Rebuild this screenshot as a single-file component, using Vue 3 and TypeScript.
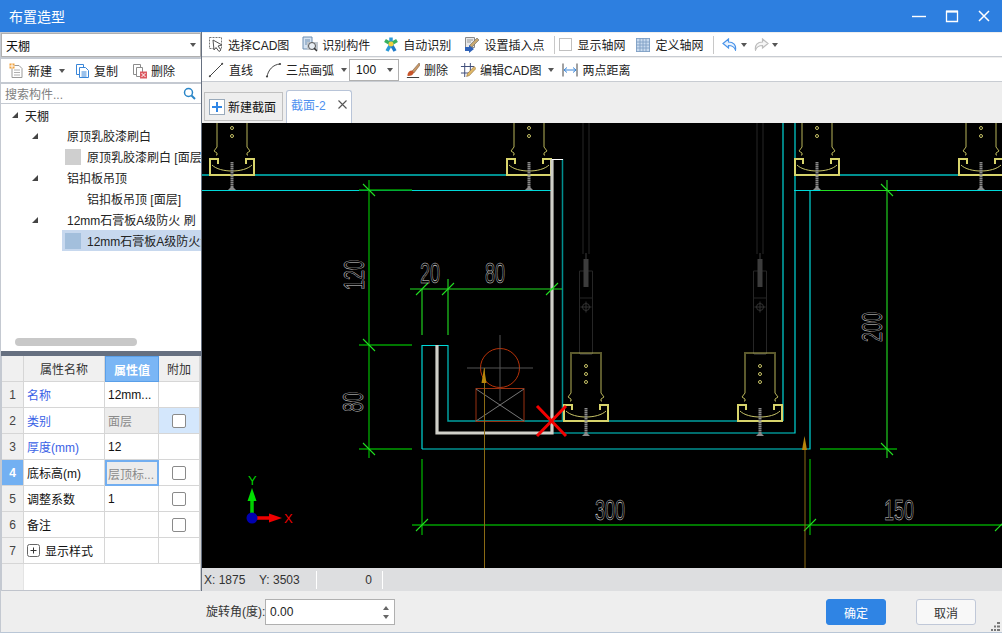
<script setup lang="ts">
interface TreeRow { label: string; level: number; swatch?: string; selected?: boolean }
interface PropRow { name: string; value: string; blue?: boolean; grayValue?: boolean; check?: boolean; active?: boolean; hilite?: boolean; plus?: boolean }

const tree: TreeRow[] = [
  { label: '天棚', level: 0 },
  { label: '原顶乳胶漆刷白', level: 1 },
  { label: '原顶乳胶漆刷白 [面层]', level: 2, swatch: '#cfcfcf' },
  { label: '铝扣板吊顶', level: 1 },
  { label: '铝扣板吊顶 [面层]', level: 2, swatch: 'transparent' },
  { label: '12mm石膏板A级防火 刷', level: 1 },
  { label: '12mm石膏板A级防火涂料', level: 2, swatch: '#a3bfdc', selected: true },
]

const props: PropRow[] = [
  { name: '名称', value: '12mm...', blue: true },
  { name: '类别', value: '面层', blue: true, grayValue: true, check: true, hilite: true },
  { name: '厚度(mm)', value: '12', blue: true },
  { name: '底标高(m)', value: '层顶标...', grayValue: true, check: true, active: true },
  { name: '调整系数', value: '1', check: true },
  { name: '备注', value: '', check: true },
  { name: '显示样式', value: '', plus: true },
]

const upperHangers = [232, 529, 817, 981]
const lowerHangers = [586, 760]

const greenLines: number[][] = [
  [369, 180, 369, 458], [359, 190, 412, 190], [359, 345, 412, 345], [359, 449, 412, 449],
  [412, 525, 1002, 525], [422, 459, 422, 535], [810, 459, 810, 535],
  [820, 449, 897, 449],
]
/* [x, y, slope]: slope 1 leans like "/", -1 leans like "\" */
const ticks: number[][] = [
  [369, 190, -1], [369, 345, -1], [369, 449, -1], [887, 190, -1], [887, 449, -1],
  [422, 289, 1], [448, 289, 1], [552, 289, 1],
  [422, 525, 1], [810, 525, 1], [1001, 525, 1],
]
</script>

<template>
  <div class="win">
    <header class="title">
      <span class="title-text">布置造型</span>
      <div class="winbtns">
        <svg width="16" height="16" viewBox="0 0 16 16"><path d="M1 8.500h14" stroke="#fff" stroke-width="1.400" /></svg>
        <svg width="14" height="14" viewBox="0 0 14 14"><path d="M1.500 2.500h11v10h-11z" fill="none" stroke="#fff" stroke-width="1.300" /><path d="M1 2.500h12" stroke="#fff" stroke-width="2" /></svg>
        <svg width="14" height="14" viewBox="0 0 14 14"><path d="M2 2l10 10M12 2L2 12" stroke="#fff" stroke-width="1.500" /></svg>
      </div>
    </header>

    <div class="body">
      <aside class="left">
        <div class="combo">
          <span>天棚</span>
          <i class="caret"></i>
        </div>
        <div class="ltools">
          <span class="ltool">
            <svg width="15" height="16" viewBox="0 0 15 16"><path d="M3 2.500h7l3 3v9H3z" fill="#fff" stroke="#9a9a9a" /><path d="M5 7h6M5 9.500h6M5 12h6" stroke="#b0b0b0" /><rect x="0.500" y="0.500" width="5" height="5" fill="#f2a23c" /><path d="M3 0.500v5M0.500 3h5" stroke="#fff" /></svg>
            新建<i class="caret new-caret"></i>
          </span>
          <span class="ltool">
            <svg width="15" height="16" viewBox="0 0 15 16"><path d="M1.500 1.500h7v10h-7z" fill="#fff" stroke="#3a86d8" /><path d="M4.500 4.500h6l3 3v7h-9z" fill="#fff" stroke="#3a86d8" /><path d="M6.500 9h5M6.500 11h5M6.500 13h5" stroke="#3a86d8" /></svg>
            复制
          </span>
          <span class="ltool">
            <svg width="15" height="16" viewBox="0 0 15 16"><path d="M1.500 1.500h7v10h-7z" fill="#fff" stroke="#8c8c8c" /><path d="M4.500 4.500h6v9h-6z" fill="#fff" stroke="#8c8c8c" /><rect x="8" y="8.500" width="7" height="7" fill="#dc5a62" /><path d="M9.500 10l4 4M13.500 10l-4 4" stroke="#fff" /></svg>
            删除
          </span>
        </div>
        <div class="search">
          <span>搜索构件...</span>
          <svg width="13" height="13" viewBox="0 0 13 13"><circle cx="5.500" cy="5.500" r="4" fill="none" stroke="#2a86c8" stroke-width="1.500" /><path d="M8.500 8.500l3.500 3.500" stroke="#2a86c8" stroke-width="2" /></svg>
        </div>
        <div class="tree">
          <div v-for="row in tree" :key="row.label" class="node" :class="['lv' + row.level, { selected: row.selected }]">
            <i v-if="row.level < 2" class="tri"></i>
            <i v-else class="swatch" :style="{ background: row.swatch }"></i>
            <span class="node-label">{{ row.label }}</span>
          </div>
          <div class="hscroll"></div>
        </div>
        <div class="splitter"></div>
        <div class="props">
          <div class="prow head">
            <div class="cell idx"></div>
            <div class="cell center">属性名称</div>
            <div class="cell center headval">属性值</div>
            <div class="cell center">附加</div>
          </div>
          <div v-for="(p, i) in props" :key="p.name" class="prow">
            <div class="cell idx center" :class="{ idxactive: p.active }">{{ i + 1 }}</div>
            <div class="cell" :class="{ bluetext: p.blue }">
              <svg v-if="p.plus" class="plus" width="13" height="13" viewBox="0 0 13 13"><rect x="0.500" y="0.500" width="12" height="12" rx="2" fill="#fff" stroke="#666" /><path d="M3.500 6.500h6M6.500 3.500v6" stroke="#333" /></svg>
              {{ p.name }}
            </div>
            <div class="cell" :class="{ grayval: p.grayValue, activeval: p.active }">{{ p.value }}</div>
            <div class="cell center" :class="{ hilite: p.hilite }"><i v-if="p.check" class="check"></i></div>
          </div>
          <div class="prest"><div class="idx restidx"></div></div>
        </div>
      </aside>

      <main class="right">
        <div class="toolbar">
          <span class="tool">
            <svg width="16" height="17" viewBox="0 0 16 17"><path d="M1.500 1.500h12v11h-12z" fill="none" stroke="#777" stroke-dasharray="2 1" /><path d="M5 4l9 5-4 1 3 4-2 1.500-3-4-2 2.500z" fill="#fff" stroke="#555" /></svg>
            选择CAD图
          </span>
          <span class="tool">
            <svg width="16" height="17" viewBox="0 0 16 17"><path d="M1 1h9v12H1z" fill="#d5e3f2" stroke="#6d8eb0" /><path d="M3 4h5M3 6h5M3 8h3" stroke="#6d8eb0" /><rect x="5" y="6" width="11" height="8" fill="#c0c8d0" /><circle cx="10" cy="10" r="3.500" fill="#e8eef4" stroke="#555" /><path d="M12 12l3 3" stroke="#333" stroke-width="1.500" /></svg>
            识别构件
          </span>
          <span class="tool">
            <svg width="16" height="17" viewBox="0 0 16 17"><path d="M8 8V1.500" stroke="#2c9ad8" stroke-width="3.500" /><path d="M8 8L2 4.500" stroke="#38b060" stroke-width="3.500" /><path d="M8 8l6-3.500" stroke="#38b060" stroke-width="3.500" /><path d="M8 8l-4 7" stroke="#2c9ad8" stroke-width="3.500" /><path d="M8 8l4 7" stroke="#1f78c8" stroke-width="3.500" /><circle cx="8" cy="8" r="2.500" fill="#f0d040" /></svg>
            自动识别
          </span>
          <span class="tool">
            <svg width="16" height="17" viewBox="0 0 16 17"><path d="M1.500 1.500h9v10h-9z" fill="#e8e8e8" stroke="#8a8a8a" /><path d="M3 4h6M3 6h4" stroke="#999" /><path d="M6 9l7-7 2 2-7 7-3 1z" fill="#c8a870" stroke="#666" stroke-width=".6" /><path d="M1 11h4V9l5 4-5 4v-2H1z" fill="#2f62b8" /></svg>
            设置插入点
          </span>
          <i class="vsep"></i>
          <span class="tool tight"><i class="tbcheck"></i>显示轴网</span>
          <span class="tool grid-tool">
            <svg width="16" height="16" viewBox="0 0 16 16"><rect x="1" y="1" width="14" height="14" fill="#c9dbef" /><path d="M1.500 1v14M5 1v14M8 1v14M11 1v14M14.500 1v14M1 1.500h14M1 5h14M1 8h14M1 11h14M1 14.500h14" stroke="#7f9fc4" stroke-width=".9" /></svg>
            定义轴网
          </span>
          <i class="vsep"></i>
          <span class="tool undo">
            <svg width="16" height="13" viewBox="0 0 16 13"><path d="M6.500 1L1 5.500 6.500 10V7.500c3.500 0 5.500.8 7 4.500.8-5-2-8-7-8z" fill="#eaf3fe" stroke="#4a94ea" stroke-width="1.200" /></svg>
            <i class="caret"></i>
          </span>
          <span class="tool redo">
            <svg width="16" height="13" viewBox="0 0 16 13"><path d="M9.500 1L15 5.500 9.500 10V7.500c-3.500 0-5.500.8-7 4.500-.8-5 2-8 7-8z" fill="#f6f6f6" stroke="#bdbdbd" stroke-width="1.200" /></svg>
            <i class="caret"></i>
          </span>
        </div>

        <div class="toolbar second">
          <span class="tool wide">
            <svg width="16" height="16" viewBox="0 0 16 16"><path d="M1.500 14.500l13-13" stroke="#444" /><circle cx="1.800" cy="14.200" r="1" fill="#444" /><circle cx="14.200" cy="1.800" r="1" fill="#444" /></svg>
            直线
          </span>
          <span class="tool">
            <svg width="17" height="16" viewBox="0 0 17 16"><path d="M2 15C3 8 8 2.500 15 2" fill="none" stroke="#444" /><circle cx="2" cy="14.500" r="1.100" fill="#444" /><circle cx="15" cy="2" r="1.100" fill="#444" /></svg>
            三点画弧<i class="caret"></i>
          </span>
          <span class="numbox">100<i class="caret"></i></span>
          <span class="tool">
            <svg width="14" height="16" viewBox="0 0 16 16" preserveAspectRatio="none"><path d="M15 1l-8 8 2 2 7-8z" fill="#c89868" stroke="#7a5a3a" stroke-width=".6" /><path d="M7 8.500c-3 0-5 1.500-5.500 5l1 .5c3 0 6-1 6.500-3.500z" fill="#c8542a" /><path d="M1 15.500h14" stroke="#333" /></svg>
            删除
          </span>
          <span class="tool">
            <svg width="16" height="16" viewBox="0 0 17 16" preserveAspectRatio="none"><path d="M1 4.500h14M1 11h9M5 1v14M11 1v8" stroke="#3c4a78" /><path d="M15 4.500l-7 7-1 3 3-1 7-7z" fill="#e0b868" stroke="#8a6a3a" stroke-width=".6" /></svg>
            编辑CAD图<i class="caret"></i>
          </span>
          <span class="tool measure">
            <svg width="16" height="16" viewBox="0 0 16 16"><path d="M1 1.500v13M15 1.500v13" stroke="#444" /><path d="M2 8h12" stroke="#3a86d8" /><path d="M5 5.500L2 8l3 2.500M11 5.500L14 8l-3 2.500" fill="none" stroke="#3a86d8" /></svg>
            两点距离
          </span>
        </div>

        <div class="tabs">
          <span class="newtab">
            <svg width="16" height="16" viewBox="0 0 16 16"><rect x=".5" y=".5" width="15" height="15" fill="#fff" stroke="#9ab" /><path d="M8 3v10M3 8h10" stroke="#2f86e6" stroke-width="2" /></svg>
            新建截面
          </span>
          <span class="tab">截面-2<svg width="9" height="9" viewBox="0 0 9 9"><path d="M.5.500l8 8M8.500.500l-8 8" stroke="#555" stroke-width="1.100" /></svg></span>
        </div>

        <div class="canvas">
          <svg class="cad" width="800" height="445" viewBox="202 123 800 445">
            <defs>
              <g id="hanger">
                <path d="M-15-67V-28l-3 4 3 2v2h-1M15-67V-28l3 4-3 2v2h1M-16-68H16" fill="none" stroke="#b8b45a" />
                <g fill="none" stroke="#c8c468"><circle cy="-55" r="1.500" /><circle cy="-47" r="1.500" /><circle cy="-39" r="1.500" /></g>
                <path d="M-14-11V-16H-22V0H22V-16H14V-11" fill="none" stroke="#d8d46c" stroke-width="2" />
                <path d="M-20-10C-12-2 12-2 20-10" fill="none" stroke="#c8c468" />
                <path d="M0-13V13" stroke="#8a8a8a" stroke-width="3" stroke-dasharray="1.500 .5" />
                <path d="M-4 15H4L1 12H-1Z" fill="#8a8a8a" />
              </g>
              <g id="rod" fill="none">
                <path d="M-3-246V-115M3-246V-115" stroke="#262626" />
                <path d="M-6.500-98V-15M6.500-98V-15M-6.500-98H6.500M-6.500-71H6.500" stroke="#262626" />
                <path d="M0-110V-82" stroke="#3c3c3c" stroke-width="5" />
                <path d="M0-116V-108" stroke="#3c3c3c" />
                <circle cy="-62" r="3.500" stroke="#333" />
                <path d="M-5.500-62H5.500M0-67.500V-56.500" stroke="#333" />
                <path d="M-6-15H6" stroke="#222" stroke-width="2" />
              </g>
            </defs>

            <g fill="none" stroke="#00a0a0" stroke-width="1.500">
              <path d="M202 175H551M794 175H1002" stroke="#009090" stroke-width="2" />
              <path d="M448 345V421H783" />
              <path d="M562.500 159V421" stroke="#008f8f" />
            </g>
            <g fill="none" stroke="#00d8d8" stroke-width="1.200">
              <path d="M202 190.500H551M794 190.500H1002" />
              <path d="M422 449V345.500H448" />
              <path d="M422 449H810V190" />
              <path d="M552 433H795V123" />
              <path d="M783 123V421" />
            </g>

            <use v-for="x in upperHangers" :key="'u' + x" href="#hanger" :x="x" y="175" />
            <use v-for="x in lowerHangers" :key="'r' + x" href="#rod" :x="x" y="369" />
            <use v-for="x in lowerHangers" :key="'l' + x" href="#hanger" :x="x" y="421" />

            <path d="M552 159V433H437V345" fill="none" stroke="#cfcfc8" stroke-width="3.200" />
            <path d="M552 159.500H563" stroke="#fff" />

            <g stroke="#009f00" fill="none" stroke-width="1.400">
              <path v-for="(l, i) in greenLines" :key="'g' + i" :d="`M${l[0]} ${l[1]}L${l[2]} ${l[3]}`" />
            </g>
            <g stroke="#22e022" stroke-width="1.100">
              <path d="M448 279V335M422 289V335M887 180V458M820 190.500H897M410 289H562" />
              <path v-for="(t, i) in ticks" :key="'t' + i" :d="`M${t[0] - 6} ${t[1] + 6 * t[2]}L${t[0] + 6} ${t[1] - 6 * t[2]}`" />
            </g>

            <g stroke="#8a8a8a" fill="none">
              <circle cx="500" cy="368" r="19.500" stroke="#b83208" />
              <path d="M467 368H533M500 335V401" stroke="#555" />
              <rect x="476" y="388.500" width="48" height="33" stroke="#983010" />
              <path d="M476 421L524 389M476 389L524 421" stroke="#777" />
            </g>

            <path d="M484.500 368V568" stroke="#8a6a14" />
            <path d="M484 368l-2.500 15h5z" fill="#b8860b" />
            <path d="M805 444V568" stroke="#8a6a14" />
            <path d="M804.500 436l-2.500 14h5z" fill="#b8860b" />

            <path d="M537 406L566 436M566 406L537 436" stroke="#f40000" stroke-width="3" />

            <g class="dim">
              <text transform="translate(420 283) scale(.95 1.600)">20</text>
              <text transform="translate(485 283) scale(.95 1.600)">80</text>
              <text transform="translate(364 290) rotate(-90) scale(.95 1.600)">120</text>
              <text transform="translate(363 412) rotate(-90) scale(.95 1.600)">80</text>
              <text transform="translate(882 342) rotate(-90) scale(.95 1.600)">200</text>
              <text transform="translate(595 520) scale(.95 1.600)">300</text>
              <text transform="translate(884 520) scale(.95 1.600)">150</text>
            </g>

            <path d="M252 517V495" stroke="#00d000" stroke-width="3.500" />
            <path d="M252 488l-4.500 13h9z" fill="#00e000" />
            <path d="M252 518H272" stroke="#f00000" stroke-width="3.500" />
            <path d="M282 518l-13-4.500v9z" fill="#f00000" />
            <circle cx="252" cy="518" r="5.500" fill="#0000b0" />
            <text x="248" y="485" class="axis green">Y</text>
            <text x="284" y="523" class="axis red">X</text>
          </svg>
        </div>

        <div class="status">
          <span class="sx">X: 1875</span>
          <span class="sy">Y: 3503</span>
          <i class="ssep"></i>
          <span class="s0">0</span>
          <i class="ssep"></i>
        </div>
      </main>
    </div>

    <footer class="foot">
      <label class="angle">旋转角(度):</label>
      <div class="spin">
        <span>0.00</span>
        <div class="spinbtns"><i class="up"></i><i class="down"></i></div>
      </div>
      <button class="btn primary">确定</button>
      <button class="btn">取消</button>
      <svg class="grip" width="9" height="9" viewBox="0 0 9 9"><path d="M6 0h3v2H6zM3 3.500h2v2H3zM6 3.500h3v2H6zM0 7h2v2H0zM3 7h2v2H3zM6 7h3v2H6z" fill="#777" /></svg>
    </footer>
  </div>
</template>

<style>
html, body { margin: 0; padding: 0; overflow: hidden; }
</style>

<style scoped>
.win { width: 1002px; height: 633px; display: flex; flex-direction: column; background: #eeeeee; font: 12px "Liberation Sans", "Noto Sans CJK SC", sans-serif; color: #222; box-sizing: border-box; overflow: hidden; }
.title { height: 32px; flex: none; background: #2d7fe0; color: #fff; display: flex; align-items: center; justify-content: space-between; }
.title-text { font-size: 14px; margin-left: 9px; }
.winbtns { display: flex; align-items: center; gap: 18px; margin-right: 11px; }
.body { flex: 1; display: flex; min-height: 0; padding-left: 1px; background: #c4c9d1; }
.left { width: 200px; flex: none; display: flex; flex-direction: column; background: #c4c9d1; }
.combo { height: 24px; margin-top: 1px; background: #fff; border: 1px solid #b0b0b0; box-sizing: border-box; display: flex; align-items: center; justify-content: space-between; padding: 0 4px; color: #111; flex: none; }
.caret { display: inline-block; width: 0; height: 0; border: 3px solid transparent; border-top: 4px solid #555; border-bottom: 0; }
.ltools { height: 23px; margin-top: 2px; background: #fff; display: flex; align-items: center; padding-left: 8px; box-sizing: border-box; gap: 10px; flex: none; }
.ltool { display: flex; align-items: center; gap: 4px; }
.ltool:last-child { margin-left: 4px; }
.new-caret { margin-left: 3px; }
.search { height: 19px; margin-top: 2px; background: #fff; display: flex; align-items: center; justify-content: space-between; padding: 0 5px 0 4px; color: #808080; flex: none; }
.tree { height: 247px; margin-top: 1px; padding-top: 1px; box-sizing: border-box; background: #fff; position: relative; overflow: hidden; flex: none; }
.node { height: 21px; display: flex; align-items: center; white-space: nowrap; color: #222; overflow: hidden; }
.lv0 { padding-left: 11px; height: 20px; }
.lv1 { padding-left: 31px; }
.lv2 { margin-left: 61px; padding-left: 3px; }
.tri { width: 0; height: 0; border-style: solid; border-width: 0 0 6px 6px; border-color: transparent transparent #444 transparent; flex: none; margin-right: 7px; }
.lv1 .tri { margin-right: 29px; }
.swatch { width: 16px; height: 16px; flex: none; margin-right: 6px; }
.selected { background: #c7d8ee; }
.hscroll { position: absolute; left: 14px; bottom: 5px; width: 122px; height: 8px; border-radius: 4px; background: #c8c8c8; }
.splitter { height: 5px; flex: none; background: #667080; width: 201px; }
.props { flex: 1; background: #fff; display: flex; flex-direction: column; margin-left: 1px; border-right: 1px solid #d0d0d0; border-bottom: 1px solid #c0c4cc; width: 198px; }
.prow { display: grid; grid-template-columns: 22px 81px 54px 41px; height: 26px; flex: none; }
.cell { display: flex; align-items: center; padding: 0 3px; border-right: 1px solid #d6d6d6; border-bottom: 1px solid #d6d6d6; box-sizing: border-box; white-space: nowrap; overflow: hidden; color: #111; }
.center { justify-content: center; padding: 0; }
.head .cell { background: #f0f0f0; color: #333; }
.head .headval { background: #7ab6f5; color: #fff; border: 1px solid #5a9fe8; font-weight: bold; }
.idx { background: #f0f0f0; color: #444; }
.idxactive { background: #72b0f2; color: #fff; font-weight: bold; }
.bluetext { color: #3a62e6; }
.grayval { background: #ececec; color: #8a8a8a; }
.activeval { border: 2px solid #72aef0; padding: 0 1px; }
.hilite { background: #d4e7fc; }
.check { width: 12px; height: 12px; border: 1px solid #8a8a8a; border-radius: 2px; background: #fff; display: block; }
.plus { margin-right: 5px; flex: none; }
.prest { flex: 1; display: flex; }
.restidx { width: 21px; border-right: 1px solid #e4e4e4; }
.right { flex: 1; min-width: 0; display: flex; flex-direction: column; background: #eeeeee; border-left: 1px solid #667080; }
.toolbar { height: 23px; margin-top: 1px; background: #fff; border-bottom: 1px solid #c8ccd2; flex: none; display: flex; align-items: center; padding-left: 6px; gap: 13px; }
.toolbar.second { margin-top: 1px; padding-left: 6px; gap: 12px; }
.tool { display: flex; align-items: center; gap: 4px; white-space: nowrap; color: #222; }
.tool.wide { gap: 5px; }
.tool .caret { margin-left: 3px; }
.tool.tight { gap: 5px; margin-left: -9px; }
.grid-tool { margin-left: -3px; }
.undo { gap: 3px; margin-left: -5px; }
.redo { gap: 3px; margin-left: -7px; }
.undo .caret, .redo .caret { margin-left: 0; }
.measure { margin-left: -4px; }
.vsep { width: 1px; height: 18px; background: #c8c8c8; margin-left: -3px; }
.tbcheck { width: 11px; height: 11px; border: 1px solid #c0c0c0; display: block; background: #fff; }
.numbox { width: 50px; height: 22px; border: 1px solid #b0b0b0; box-sizing: border-box; display: flex; align-items: center; justify-content: space-between; padding: 0 5px 0 6px; margin-left: -10px; margin-right: -5px; color: #111; }
.tabs { height: 41px; flex: none; display: flex; align-items: flex-end; padding-left: 2px; gap: 3px; background: #eeeeee; }
.newtab { width: 79px; height: 29px; margin-bottom: 2px; border: 1px solid #c0c0c0; box-sizing: border-box; display: flex; align-items: center; gap: 3px; padding-left: 4px; color: #111; background: #eeeeee; }
.tab { width: 66px; height: 33px; background: #fff; border: 1px solid #b8c4d8; border-bottom: 0; border-radius: 3px 3px 0 0; box-sizing: border-box; display: flex; align-items: center; justify-content: space-between; padding: 0 4px 6px 4px; color: #4d90f0; }
.canvas { height: 445px; flex: none; background: #000; overflow: hidden; }
.cad { display: block; }
.dim { font: 19px "Liberation Sans", sans-serif; fill: none; stroke: #dcdcdc; stroke-width: .35; }
.axis { font: 13px "Liberation Sans", sans-serif; }
.green { fill: #00d000; }
.red { fill: #f00000; }
.status { height: 23px; flex: none; background: #dddee0; display: flex; align-items: center; color: #333; position: relative; }
.sx { margin-left: 2px; width: 55px; }
.sy { width: 57px; }
.ssep { width: 1px; height: 18px; background: #fff; }
.s0 { width: 65px; text-align: right; padding-right: 10px; box-sizing: border-box; }
.foot { height: 42px; flex: none; background: #eeeeee; border-bottom: 1px solid #b9c6d6; border-left: 1px solid #c4c9d1; box-sizing: border-box; display: flex; align-items: flex-start; padding-top: 8px; position: relative; }
.angle { margin-left: 205px; width: 59px; line-height: 26px; white-space: nowrap; color: #333; }
.spin { width: 130px; height: 26px; background: #fff; border: 1px solid #b0b0b0; box-sizing: border-box; display: flex; align-items: center; justify-content: space-between; padding: 0 5px 0 4px; color: #222; }
.spinbtns { display: flex; flex-direction: column; gap: 5px; }
.up, .down { display: block; width: 0; height: 0; border: 3px solid transparent; }
.up { border-bottom: 4px solid #666; border-top: 0; }
.down { border-top: 4px solid #666; border-bottom: 0; }
.btn { width: 60px; height: 26px; padding: 0; background: #f8f8f8; border: 1px solid #c0c8d8; border-radius: 3px; font: inherit; color: #333; margin-left: 30px; }
.btn.primary { background: #2f84e4; border-color: #2f84e4; color: #fff; margin-left: 431px; }
.grip { position: absolute; right: 2px; bottom: 1px; }
</style>
